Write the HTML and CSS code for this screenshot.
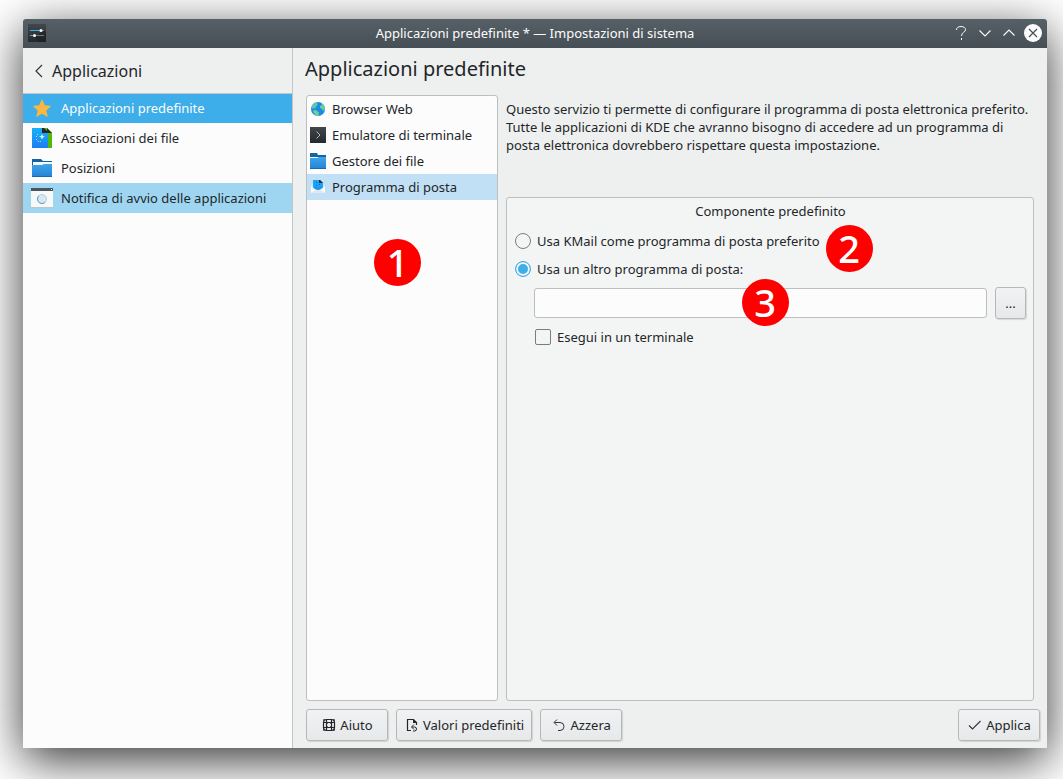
FILE: index.html
```html
<!DOCTYPE html>
<html lang="it">
<head>
<meta charset="utf-8">
<title>Applicazioni predefinite * — Impostazioni di sistema</title>
<link rel="stylesheet" href="styles.css">
</head>
<body>
<svg class="defs" aria-hidden="true">
  <defs>
    <linearGradient id="folder-blue" x1="0" y1="0" x2="0" y2="1"><stop offset="0" stop-color="#3ea5ea"/><stop offset="1" stop-color="#2483d6"/></linearGradient>
    <linearGradient id="sheet-blue" x1="0" y1="0" x2="0" y2="1"><stop offset="0" stop-color="#17b3f9"/><stop offset="1" stop-color="#1d7df0"/></linearGradient>
    <linearGradient id="dark-tile" x1="0" y1="0" x2="0" y2="1"><stop offset="0" stop-color="#42474b"/><stop offset="1" stop-color="#25292c"/></linearGradient>
  </defs>
</svg>
<div class="window">
  <header class="titlebar">
    <svg class="app-icon" width="18" height="18" viewBox="0 0 18 18"><rect width="18" height="18" fill="url(#dark-tile)"/><path d="M7 13l9-7 2 2v10h-7z" fill="#1d2022" opacity=".6"/><path d="M2 6.500h10M2 11.500h3" stroke="#3daee9"/><path d="M14 6.500h2M8 11.500h8" stroke="#73797d"/><circle cx="13" cy="6.500" r="1.500" fill="#fff"/><circle cx="6.500" cy="11.500" r="1.500" fill="#fff"/></svg>
    <h1 class="window-title">Applicazioni predefinite * — Impostazioni di sistema</h1>
    <div class="window-controls">
      <button class="window-button" aria-label="Aiuto contestuale"><svg width="18" height="18" viewBox="0 0 18 18"><path d="M4.500 6c0-2.200 1.800-3.500 4.500-3.500s4.500 1.300 4.500 3.200c0 2.800-4 2.300-4 6.300" fill="none" stroke="#fcfcfc"/><rect x="9" y="14" width="1" height="2" fill="#fcfcfc"/></svg></button>
      <button class="window-button" aria-label="Minimizza"><svg width="18" height="18" viewBox="0 0 18 18"><path d="M3.500 6.500l5.500 5.500 5.500-5.500" fill="none" stroke="#fcfcfc" stroke-width="1.100"/></svg></button>
      <button class="window-button" aria-label="Massimizza"><svg width="18" height="18" viewBox="0 0 18 18"><path d="M3.500 11.500l5.500-5.500 5.500 5.500" fill="none" stroke="#fcfcfc" stroke-width="1.100"/></svg></button>
      <button class="window-button" aria-label="Chiudi"><svg width="18" height="18" viewBox="0 0 18 18"><circle cx="9" cy="9" r="9" fill="#fcfcfc"/><path d="M5 5l8 8M13 5l-8 8" stroke="#475057" stroke-width="1.200"/></svg></button>
    </div>
  </header>
  <div class="content">
    <nav class="sidebar">
      <button class="back">
        <svg width="8" height="14" viewBox="0 0 8 14"><path d="M7 1L1 7l6 6" fill="none" stroke="#31363b" stroke-width="1.200"/></svg>
        <span>Applicazioni</span>
      </button>
      <div class="nav-list">
        <a class="nav-item selected" href="#predefinite">
          <svg width="22" height="22" viewBox="0 0 22 22"><path d="M11 2l2.700 6.300 6.500.600-4.900 4.500 1.600 6.600-5.900-3.200L5.100 20l1.600-6.600L1.800 8.900l6.500-.600z" fill="#fdb740"/></svg>
          <span>Applicazioni predefinite</span>
        </a>
        <a class="nav-item" href="#file">
          <svg width="22" height="22" viewBox="0 0 22 22"><path d="M7 1h9l5 5v15H7z" fill="#54b80a"/><path d="M7 1h6v3H7z" fill="#33d08a"/><path d="M16 1l5 5h-5z" fill="#26292b"/><path d="M1 1h10l6 5v15H1z" fill="url(#sheet-blue)"/><path d="M11 1h2l4 4v1h-6z" fill="#26292b"/><path d="M11 7l1 2 2 .5-2 1-1 2-1-2-2-1 2-.5z" fill="#d8f4ff"/><path d="M5 9h1v1H5zM5 12h1v1H5zM7 14h1v1H7zM6 7h1v1H6zM9 14h1v1H9z" fill="#d8f4ff" opacity=".7"/></svg>
          <span>Associazioni dei file</span>
        </a>
        <a class="nav-item" href="#posizioni">
          <svg width="22" height="22" viewBox="0 0 22 22"><path d="M1 2h9l2 2h9v4H1z" fill="#15649f"/><path d="M2 5h19v5H2z" fill="#f4f8fa"/><path d="M1 8h10l2-1h8v13H1z" fill="url(#folder-blue)"/><path d="M1 19h20v1H1z" fill="#1b6aae"/></svg>
          <span>Posizioni</span>
        </a>
        <a class="nav-item hovered" href="#notifica">
          <svg width="22" height="22" viewBox="0 0 22 22"><path d="M0 4h22v17H0z" fill="#f7f8f8"/><path d="M0 1h22v3H0z" fill="#4b555d"/><path d="M20 2h1v1h-1z" fill="#fff"/><path d="M0 20h22v1H0z" fill="#bdc5ca"/><circle cx="11" cy="12" r="4.500" fill="#e2e5e7" stroke="#a9cfe6"/><path d="M7.800 8.800a4.500 4.500 0 0 0 6.400 6.400" fill="none" stroke="#45a9e6"/></svg>
          <span>Notifica di avvio delle applicazioni</span>
        </a>
      </div>
    </nav>
    <main class="main">
      <h2 class="page-title">Applicazioni predefinite</h2>
      <div class="panes">
        <div class="components">
          <a class="component" href="#web"><svg width="16" height="16" viewBox="0 0 16 16"><circle cx="8" cy="8" r="7" fill="#1e88e5"/><path d="M2 4.500C3.500 2 5.500 1 8 1L7 3l1 1-2 1.500L5 8 3.500 7 2 8z" fill="#5cc9a0"/><path d="M11 2c2 1 4 3.500 4 6l-2 2-1-2-2-1 0-2 2-1z" fill="#67cf9c"/><path d="M3 9.500L6 9l3 2.500L8.500 15C6 15 3.500 13 3 9.500z" fill="#69d198"/></svg><span>Browser Web</span></a>
          <a class="component" href="#terminale"><svg width="16" height="16" viewBox="0 0 16 16"><rect width="16" height="16" fill="url(#dark-tile)"/><path d="M6.500 4.500L10 8l-3.500 3.500" fill="none" stroke="#b4bbbf"/></svg><span>Emulatore di terminale</span></a>
          <a class="component" href="#gestore"><svg width="16" height="16" viewBox="0 0 16 16"><path d="M0 0h7l1 2h8v4H0z" fill="#15649f"/><path d="M0 4h16v3H0z" fill="#f4f8fa"/><path d="M0 5h7l2-1h7v12H0z" fill="url(#folder-blue)"/><path d="M0 15h16v1H0z" fill="#1b6aae"/></svg><span>Gestore dei file</span></a>
          <a class="component current" href="#posta"><svg width="16" height="16" viewBox="0 0 16 16"><path d="M1 6l2-1h10l2 1v8H1z" fill="#dfe6ea"/><path d="M3 1h7l3 3v6H3z" fill="#1aa3fa"/><path d="M9 1h1l3 3H9z" fill="#25292c"/><path d="M6 3h1v1H6zM9 5h1v1H9zM6 6h1v1H6z" fill="#0866bd"/><path d="M1 7l4.500 3.500L8 12l2.500-1.500L15 7v7H1z" fill="#fafafa"/><path d="M1 14l5.500-4h3L15 14z" fill="#e4e8ea"/><path d="M4.500 8h7c0 2-1.500 3-3.500 3s-3.500-1-3.500-3z" fill="#2095ef"/></svg><span>Programma di posta</span></a>
          <span class="badge badge-one">1</span>
        </div>
        <section class="details">
          <p class="description">Questo servizio ti permette di configurare il programma di posta elettronica preferito. Tutte le applicazioni di KDE che avranno bisogno di accedere ad un programma di posta elettronica dovrebbero rispettare questa impostazione.</p>
          <form class="group" aria-labelledby="group-title">
            <h3 class="group-title" id="group-title">Componente predefinito</h3>
            <div class="option">
              <label class="choice"><input class="radio" type="radio" name="mail"><span>Usa KMail come programma di posta preferito</span></label>
              <span class="badge badge-two">2</span>
            </div>
            <div class="option">
              <label class="choice"><input class="radio" type="radio" name="mail" checked><span>Usa un altro programma di posta:</span></label>
            </div>
            <div class="command">
              <div class="field">
                <input class="text-input" type="text" aria-label="Programma di posta">
                <span class="badge badge-three">3</span>
              </div>
              <button class="button browse" type="button">...</button>
            </div>
            <label class="choice terminal"><input class="checkbox" type="checkbox"><span>Esegui in un terminale</span></label>
          </form>
        </section>
      </div>
      <footer class="actions">
        <button class="button"><svg width="16" height="16" viewBox="0 0 16 16"><g fill="none" stroke="#232629" stroke-width="1.200"><rect x="2.500" y="2.500" width="11" height="11" rx="3"/><path d="M5.500 2.500v11M10.500 2.500v11M2.500 5.500h11M2.500 10.500h11"/></g><path d="M2 2h2v2H2zM12 2h2v2h-2zM2 12h2v2H2zM12 12h2v2h-2zM5 5h2v2H5zM9 5h2v2H9zM5 9h2v2H5zM9 9h2v2H9z" fill="#232629" opacity=".6"/></svg><span>Aiuto</span></button>
        <button class="button"><svg width="16" height="16" viewBox="0 0 16 16"><path d="M7 13.500H3.500v-11h6l3 3V8" fill="none" stroke="#232629" stroke-width="1.200"/><path d="M9 2l4 4H9z" fill="#232629"/><path d="M10 7.500L7.500 10l2.500 2.500M8 10h2.500a2 2 0 0 1 0 4H9" fill="none" stroke="#232629"/></svg><span>Valori predefiniti</span></button>
        <button class="button"><svg width="16" height="16" viewBox="0 0 16 16"><path d="M5 2.500L2 5.500l3 3M2.500 5.500H8a4 4 0 0 1 0 8H6" fill="none" stroke="#31363b"/></svg><span>Azzera</span></button>
        <button class="button apply"><svg width="16" height="16" viewBox="0 0 16 16"><path d="M2 8.500l3.500 3.500L13.500 4" fill="none" stroke="#31363b" stroke-width="1.100"/></svg><span>Applica</span></button>
      </footer>
    </main>
  </div>
</div>
</body>
</html>
```
FILE: styles.css
```css
* {
  box-sizing: border-box;
}

body {
  margin: 0;
  min-height: 100vh;
  display: flex;
  padding: 19px 16px 31px 23px;
  overflow: hidden;
  background: #fff;
  color: #232629;
  font: 13px/18px "Noto Sans", sans-serif;
}

button,
input {
  margin: 0;
  font: inherit;
  color: inherit;
}

svg {
  display: block;
  flex: none;
}

h1,
h2,
h3,
p {
  margin: 0;
  font-size: inherit;
  font-weight: 400;
}

a {
  color: inherit;
  text-decoration: none;
}

.defs {
  position: absolute;
  width: 0;
  height: 0;
}

.window {
  flex: 1;
  display: flex;
  flex-direction: column;
  border-radius: 3px 3px 0 0;
  background: #eef0f0;
  box-shadow: 0 12px 48px rgba(0, 0, 0, 0.8);
}

.titlebar {
  display: grid;
  grid-template-columns: 1fr auto 1fr;
  align-items: center;
  height: 29px;
  padding: 0 5px 1px;
  border-radius: 3px 3px 0 0;
  background: linear-gradient(#566067, #474f56);
  color: #fcfcfc;
}

.window-controls {
  display: flex;
  justify-content: flex-end;
  gap: 6px;
}

.window-button {
  padding: 0;
  border: 0;
  background: none;
}

.content {
  flex: 1;
  display: flex;
}

.sidebar {
  flex: none;
  display: flex;
  flex-direction: column;
  width: 270px;
  border-right: 1px solid #c3c6c7;
}

.back {
  display: flex;
  align-items: center;
  gap: 9px;
  height: 45px;
  padding: 0 12px;
  border: 0;
  background: none;
  font-size: 16px;
}

.nav-list {
  flex: 1;
  background: #fcfcfc;
}

.nav-item {
  display: flex;
  align-items: center;
  gap: 8px;
  height: 30px;
  padding: 0 8px;
}

.selected {
  background: #3daee9;
  box-shadow: inset 0 1px #c3c6c7;
  color: #fcfcfc;
}

.hovered {
  background: #9ed6f2;
}

.main {
  flex: 1;
  min-width: 0;
  display: flex;
  flex-direction: column;
  padding: 7px 7px 7px 12px;
}

.page-title {
  padding-bottom: 12px;
  font-size: 20px;
  line-height: 28px;
}

.panes {
  flex: 1;
  display: flex;
  gap: 8px;
  padding: 0 6px 0 1px;
}

.components {
  position: relative;
  flex: none;
  width: 192px;
  border: 1px solid #bcbebf;
  border-radius: 3px;
  background: #fcfcfc;
}

.component {
  display: flex;
  align-items: center;
  gap: 6px;
  height: 26px;
  padding: 0 3px;
}

.current {
  background: #c2e0f5;
}

.details {
  flex: 1;
  min-width: 0;
  display: flex;
  flex-direction: column;
}

.description {
  min-height: 102px;
  padding-top: 5px;
}

.group {
  flex: 1;
  border: 1px solid #bcbebf;
  border-radius: 3px;
  padding: 4px 7px 0 8px;
  background: #f3f5f5;
}

.group-title {
  padding-bottom: 7px;
  text-align: center;
}

.option {
  position: relative;
  width: fit-content;
  padding: 5px 0;
}

.choice {
  display: flex;
  align-items: center;
  gap: 6px;
  width: fit-content;
}

.radio,
.checkbox {
  appearance: none;
  flex: none;
  width: 16px;
  height: 16px;
  border: 1px solid #7a7d7f;
}

.radio {
  border-radius: 50%;
}

.radio:checked {
  border-color: #3daee9;
  background: #3daee9;
  box-shadow: inset 0 0 0 2px #f3f5f5;
}

.checkbox {
  border-radius: 2px;
}

.command {
  display: flex;
  align-items: center;
  gap: 8px;
  padding: 4px 0 9px 19px;
}

.field {
  position: relative;
  flex: 1;
}

.text-input {
  display: block;
  width: 100%;
  height: 30px;
  padding: 0 6px;
  border: 1px solid #bcbebf;
  border-radius: 3px;
  background: #fcfcfc;
}

.terminal {
  padding-left: 20px;
}

.button {
  display: flex;
  align-items: center;
  justify-content: center;
  gap: 3px;
  min-width: 82px;
  height: 32px;
  padding: 0 7px;
  border: 1px solid #b5b8b9;
  border-radius: 3px;
  background: linear-gradient(#f1f2f3, #e7e8e9);
  box-shadow: 1px 1px 1px rgba(0, 0, 0, 0.12);
}

.browse {
  min-width: 31px;
}

.actions {
  display: flex;
  gap: 8px;
  padding: 8px 0 0 1px;
}

.apply {
  margin-left: auto;
}

.badge {
  position: absolute;
  width: 47px;
  height: 47px;
  border-radius: 50%;
  background: #f00;
  color: #fff;
  font-size: 38px;
  font-weight: 500;
  line-height: 47px;
  text-align: center;
}

.badge-one {
  left: 67px;
  top: 143px;
}

.badge-two {
  left: calc(100% + 6px);
  top: -2px;
}

.badge-three {
  left: calc(50% - 19px);
  top: -9px;
}
```
